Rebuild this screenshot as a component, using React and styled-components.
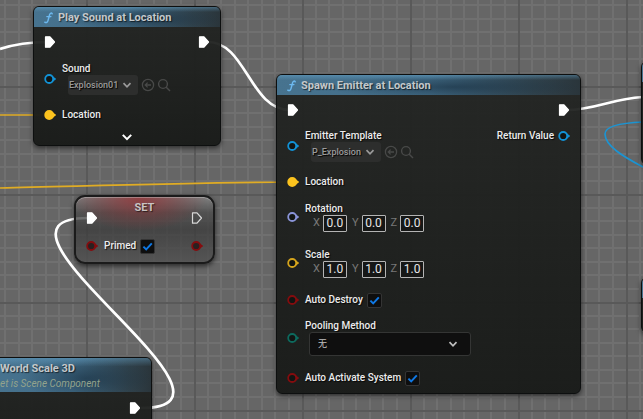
import React from "react";
import styled, { createGlobalStyle } from "styled-components";

const GlobalStyle = createGlobalStyle`
  * { box-sizing: border-box; }
  body { margin: 0; background: #666; }
  button, input, select { font: inherit; color: inherit; margin: 0; padding: 0; }
`;

const Canvas = styled.main`
  position: relative;
  height: 100vh;
  overflow: hidden;
  background: #666;
  color: #e6e6e6;
  font-family: Roboto, "Noto Sans CJK SC", sans-serif;
  font-size: 10px;
  line-height: 12px;
`;

const Backdrop = styled.svg`
  position: absolute;
  inset: 0;
  width: 100%;
  height: 100%;
  pointer-events: none;
`;

const Node = styled.section`
  position: absolute;
  left: ${(p) => p.$x}px;
  top: ${(p) => p.$y}px;
  width: ${(p) => p.$w}px;
  padding-bottom: ${(p) => p.$bottom ?? 0}px;
  border: 1px solid #0d0f0f;
  border-radius: 6px;
  overflow: hidden;
  background: linear-gradient(rgba(34, 36, 34, 0.95), rgba(25, 27, 25, 0.97));
  box-shadow: 0 2px 5px rgba(0, 0, 0, 0.55);
`;

const VariableNode = styled(Node)`
  border-radius: 11px;
  border: 2px solid #1b1b1b;
  background:
    radial-gradient(ellipse 68px 34px at 46% 0, rgba(150, 48, 52, 0.8), rgba(130, 45, 48, 0.35) 60%, transparent),
    linear-gradient(rgba(130, 130, 130, 0.9), rgba(76, 76, 76, 0.8) 24%, rgba(58, 58, 58, 0.76) 50%, rgba(80, 80, 80, 0.8));
  box-shadow: inset 0 1px 0 rgba(200, 200, 200, 0.45), 0 2px 5px rgba(0, 0, 0, 0.6);
`;

const Header = styled.header`
  display: flex;
  align-items: center;
  gap: 4px;
  height: 20px;
  padding: 1px 9px 0;
  background:
    linear-gradient(rgba(110, 175, 215, 0.4), transparent 25%),
    radial-gradient(ellipse 42% 60% at 58% 60%, rgba(18, 40, 58, 0.55), transparent),
    linear-gradient(90deg, #47738f, #426c87 50%, #31434d 85%, #2a353b);
`;

const TallHeader = styled(Header)`
  height: 34px;
  padding: 2px 5px 0;
`;

const Title = styled.h2`
  margin: 0;
  font-size: 11px;
  line-height: 16px;
  font-weight: 700;
  color: #c3c8cb;
  text-shadow: 1px 1px 1px rgba(0, 0, 0, 0.6);
  white-space: nowrap;
`;

const Subtitle = styled.p`
  margin: 0;
  line-height: 14px;
  font-style: italic;
  color: #93a38c;
  white-space: nowrap;
`;

const SetTitle = styled(Title)`
  padding-top: 4px;
  line-height: 14px;
  text-align: center;
  color: #c9c3c3;
`;

const Row = styled.div`
  display: flex;
  align-items: center;
  justify-content: space-between;
  height: ${(p) => p.$h}px;
  margin-top: ${(p) => p.$top ?? 0}px;
  padding: 0 10px;
`;

const PinGroup = styled.div`
  display: flex;
  align-items: center;
  gap: 6px;
`;

const OutputPin = styled(PinGroup)`
  align-self: flex-start;
  height: 22px;
  gap: 4px;
`;

const Stack = styled.div`
  display: flex;
  flex-direction: column;
`;

const Label = styled.label`
  color: #ececec;
  font-weight: 500;
  white-space: nowrap;
  text-shadow: 1px 1px 1px rgba(0, 0, 0, 0.8);
`;

const Line = styled.div`
  display: flex;
  align-items: center;
  gap: ${(p) => p.$gap ?? 3}px;
  padding-left: ${(p) => p.$indent ?? 0}px;
`;

const AssetPicker = styled.button`
  display: flex;
  align-items: center;
  justify-content: space-between;
  width: 70px;
  height: 20px;
  padding: 0 6px 0 1px;
  border: 0;
  border-radius: 3px;
  background: #2d2e2d;
  color: #9a9a9a;
  font-size: 9px;
  font-weight: 500;
  text-shadow: 1px 1px 1px #000;
`;

const ToolButton = styled.button`
  display: flex;
  border: 0;
  background: none;
  color: #484948;
`;

const Axis = styled.label`
  display: flex;
  align-items: center;
  gap: 3px;
  color: #787878;
  font-size: 11px;
`;

const NumberBox = styled.input`
  width: 24px;
  height: 17px;
  border: 1px solid #b4b4b4;
  border-radius: 1px;
  background: #161716;
  color: #e6e6e6;
  font-size: 12px;
  text-align: center;
`;

const Check = styled.input`
  appearance: none;
  width: 15px;
  height: 15px;
  border: 1px solid #343434;
  border-radius: 2px;
  background: #0e0e0e;
`;

const CheckBox = styled.span`
  display: grid;
  > * { grid-area: 1 / 1; }
  svg { pointer-events: none; }
`;

const SelectBox = styled.div`
  display: grid;
  align-items: center;
  width: 162px;
  > * { grid-area: 1 / 1; }
  svg { justify-self: end; margin-right: 13px; color: #c0c0c0; pointer-events: none; }
`;

const Select = styled.select`
  appearance: none;
  width: 100%;
  height: 24px;
  padding-left: 8px;
  border: 1px solid #343534;
  border-radius: 3px;
  background: #0f0f0f;
  color: #c0c0c0;
  font-size: 9px;
`;

const Expander = styled.button`
  display: flex;
  align-items: center;
  justify-content: center;
  width: 100%;
  height: 16px;
  border: 0;
  background: none;
  color: #fff;
`;

const Block = styled.svg`
  display: block;
  flex: none;
`;

function ExecPin({ hollow }) {
  return (
    <Block width="12" height="14" viewBox="0 0 12 14">
      <path
        d="M1.5 1.8H6L10.5 7L6 12.2H1.5Z"
        fill={hollow ? "none" : "#fff"}
        stroke={hollow ? "#d8d8d8" : "#fff"}
        strokeWidth="1.2"
        strokeLinejoin="round"
      />
    </Block>
  );
}

function DataPin({ color, filled, core = "#121513" }) {
  return (
    <Block width="12" height="12" viewBox="0 0 12 12">
      <path d="M9 3.4L12.4 6L9 8.6Z" fill={color} />
      <circle cx="5.2" cy="6" r="4" fill={filled ? color : core} stroke={color} strokeWidth="1.8" />
    </Block>
  );
}

function Chevron({ size = 10 }) {
  return (
    <Block width={size} height={size} viewBox="0 0 10 10" fill="none" stroke="currentColor" strokeWidth="1.7">
      <path d="M1.5 3.2L5 6.8L8.5 3.2" />
    </Block>
  );
}

function FunctionIcon() {
  return (
    <Block width="11" height="13" viewBox="0 0 11 13" fill="none" stroke="#6cb8ee" strokeLinecap="round">
      <path d="M9.2 2.8C8.6 1.6 7.2 1.8 6.6 3.8L5 9.6C4.4 11.6 3 12 1.8 11.2" strokeWidth="1.5" />
      <path d="M3.8 5.6H8" strokeWidth="1.2" />
    </Block>
  );
}

function AssetTools() {
  return (
    <Line $gap={2}>
      <ToolButton aria-label="Use selected asset">
        <Block width="14" height="14" viewBox="0 0 14 14" fill="none" stroke="currentColor" strokeWidth="1.3">
          <circle cx="7" cy="7" r="5.6" />
          <path d="M10 7H4.4M6.6 4.6L4.2 7L6.6 9.4" />
        </Block>
      </ToolButton>
      <ToolButton aria-label="Browse to asset">
        <Block width="14" height="14" viewBox="0 0 14 14" fill="none" stroke="currentColor" strokeWidth="1.4">
          <circle cx="6" cy="6" r="4.4" />
          <path d="M9 9L13 13" />
        </Block>
      </ToolButton>
    </Line>
  );
}

function AssetInput({ label, value, color }) {
  return (
    <PinGroup>
      <DataPin color={color} />
      <Stack>
        <Label as="span">{label}</Label>
        <Line $indent={6}>
          <AssetPicker aria-label={label}>
            {value}
            <Chevron />
          </AssetPicker>
          <AssetTools />
        </Line>
      </Stack>
    </PinGroup>
  );
}

function VectorInput({ label, value, color }) {
  return (
    <PinGroup>
      <DataPin color={color} />
      <Stack>
        <Label as="span">{label}</Label>
        <Line $indent={8} $gap={5}>
          {["X", "Y", "Z"].map((axis) => (
            <Axis key={axis}>
              {axis}
              <NumberBox defaultValue={value} />
            </Axis>
          ))}
        </Line>
      </Stack>
    </PinGroup>
  );
}

function BoolInput({ id, label, core }) {
  return (
    <PinGroup>
      <DataPin color="#850c0e" core={core} />
      <Line $gap={4}>
        <Label htmlFor={id}>{label}</Label>
        <CheckBox>
          <Check id={id} type="checkbox" defaultChecked />
          <Block width="15" height="15" viewBox="0 0 15 15" fill="none" stroke="#0f78e4" strokeWidth="2">
            <path d="M3.4 7.6L6.2 10.4L11.8 4.4" />
          </Block>
        </CheckBox>
      </Line>
    </PinGroup>
  );
}

function PlainPin({ label, color, filled }) {
  return (
    <PinGroup>
      <DataPin color={color} filled={filled} />
      <Label as="span">{label}</Label>
    </PinGroup>
  );
}

const minorLines = [13, 26, 40, 53, 67, 80, 94];

function GraphBackdrop() {
  return (
    <Backdrop aria-hidden="true">
      <defs>
        <pattern id="grid" x="86" y="86" width="108" height="108" patternUnits="userSpaceOnUse">
          {minorLines.map((n) => (
            <path key={n} d={`M${n} 0h2v108h-2zM0 ${n}h108v2h-108z`} fill="#707070" />
          ))}
          <path d="M0 0h108v2H2v106H0z" fill="#595959" />
        </pattern>
      </defs>
      <rect width="100%" height="100%" fill="url(#grid)" />
      <g fill="none" stroke="#fff" strokeWidth="2.7">
        <path d="M0 49C12 45 24 42 48 42" />
        <path d="M208 42C246 42 250 110 290 110" />
        <path d="M141 408C271 408 -42 218 88 218" />
        <path d="M566 110C595 110 610 99 643 97" />
      </g>
      <g fill="none" stroke="#e0ac24" strokeWidth="1.7">
        <path d="M0 115H48" />
        <path d="M0 188C90 186 180 183 292 182" />
      </g>
      <path d="M643 122C618 123 605 127 605 134C605 146 624 157 643 167" fill="none" stroke="#1c94d2" strokeWidth="1.7" />
    </Backdrop>
  );
}

const blue = "#1292d6";
const yellow = "#fcc31e";

export default function App() {
  return (
    <Canvas>
      <GlobalStyle />
      <GraphBackdrop />

      <Node $x={33} $y={6} $w={188}>
        <Header>
          <FunctionIcon />
          <Title>Play Sound at Location</Title>
        </Header>
        <Row $h={30}><ExecPin /><ExecPin /></Row>
        <Row $h={44}><AssetInput label="Sound" value="Explosion01" color={blue} /></Row>
        <Row $h={28}><PlainPin label="Location" color={yellow} filled /></Row>
        <Expander aria-label="Show advanced pins"><Chevron size={12} /></Expander>
      </Node>

      <Node $x={276} $y={74} $w={305} $bottom={2}>
        <Header>
          <FunctionIcon />
          <Title>Spawn Emitter at Location</Title>
        </Header>
        <Row $h={30}><ExecPin /><ExecPin /></Row>
        <Row $h={42}>
          <AssetInput label="Emitter Template" value="P_Explosion" color={blue} />
          <OutputPin>
            <Label as="span">Return Value</Label>
            <DataPin color={blue} />
          </OutputPin>
        </Row>
        <Row $h={30}><PlainPin label="Location" color={yellow} filled /></Row>
        <Row $h={40}><VectorInput label="Rotation" value="0.0" color="#8a94d8" /></Row>
        <Row $h={52}><VectorInput label="Scale" value="1.0" color="#d6a51c" /></Row>
        <Row $h={22}><BoolInput id="auto-destroy" label="Auto Destroy" /></Row>
        <Row $h={54}>
          <PinGroup>
            <DataPin color="#0d6a5e" />
            <Stack>
              <Label htmlFor="pooling">Pooling Method</Label>
              <Line $indent={4}>
                <SelectBox>
                  <Select id="pooling"><option>无</option></Select>
                  <Chevron />
                </SelectBox>
              </Line>
            </Stack>
          </PinGroup>
        </Row>
        <Row $h={26}><BoolInput id="auto-activate" label="Auto Activate System" /></Row>
      </Node>

      <VariableNode $x={74} $y={195} $w={141} $bottom={1}>
        <SetTitle>SET</SetTitle>
        <Row $h={6}><ExecPin /><ExecPin hollow /></Row>
        <Row $h={30} $top={10}>
          <BoolInput id="primed" label="Primed" core="#2a2020" />
          <DataPin color="#850c0e" core="#2a2020" />
        </Row>
      </VariableNode>

      <Node $x={-6} $y={357} $w={158} $bottom={40}>
        <TallHeader>
          <Stack>
            <Title>World Scale 3D</Title>
            <Subtitle>et is Scene Component</Subtitle>
          </Stack>
        </TallHeader>
        <Row $h={32}><span /><ExecPin /></Row>
      </Node>

      <Node $x={641} $y={61} $w={180} $bottom={82}><Header /></Node>
      <Node $x={641} $y={277} $w={180} $bottom={34}><Header /></Node>
    </Canvas>
  );
}
